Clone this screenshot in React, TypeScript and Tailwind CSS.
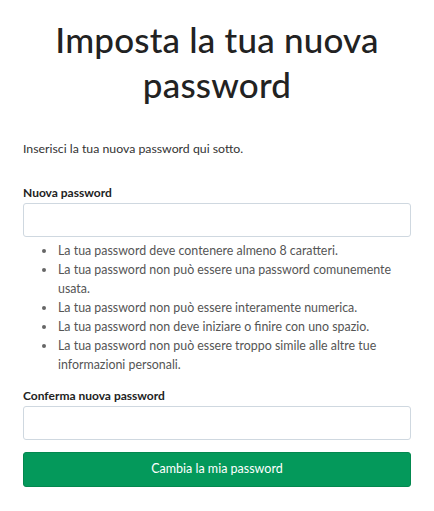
const RULES = [
  "La tua password deve contenere almeno 8 caratteri.",
  "La tua password non può essere una password comunemente usata.",
  "La tua password non può essere interamente numerica.",
  "La tua password non deve iniziare o finire con uno spazio.",
  "La tua password non può essere troppo simile alle altre tue informazioni personali.",
];

export default function App() {
  return (
    <div className="min-h-[511px] w-[434px] bg-white px-[23px] font-['Lato',sans-serif] text-[#222]">
      <h1 className="pt-[17px] text-center text-[35px] font-medium leading-[45px] tracking-[0.2px] text-[#222]">
        Imposta la tua nuova password
      </h1>

      <p className="mt-[32px] text-[12.3px] leading-[20px] text-[#333]">
        Inserisci la tua nuova password qui sotto.
      </p>

      <form className="mt-[24px]" onSubmit={(e) => e.preventDefault()}>
        <label className="block text-[12px] font-bold leading-[20px] text-[#222]" htmlFor="pw1">
          Nuova password
        </label>
        <input
          className="block h-[34px] w-full rounded-[3px] border border-[#cfd8e0] px-2 outline-none"
          id="pw1"
          type="password"
        />
        <ul className="mt-[4px] list-disc pl-[34px] text-[12.4px] leading-[19px] text-[#555] marker:text-[#666]">
          {RULES.map((rule) => (
            <li className="pl-[1px]" key={rule}>
              {rule}
            </li>
          ))}
        </ul>

        <label className="mt-[12px] block text-[12px] font-bold leading-[20px] text-[#222]" htmlFor="pw2">
          Conferma nuova password
        </label>
        <input
          className="block h-[34px] w-full rounded-[3px] border border-[#cfd8e0] px-2 outline-none"
          id="pw2"
          type="password"
        />

        <button
          className="mt-[12px] block h-[35px] w-full rounded-[3px] border border-[#03884f] bg-[#04995b] text-[12.5px] text-white"
          type="submit"
        >
          Cambia la mia password
        </button>
      </form>
    </div>
  );
}
